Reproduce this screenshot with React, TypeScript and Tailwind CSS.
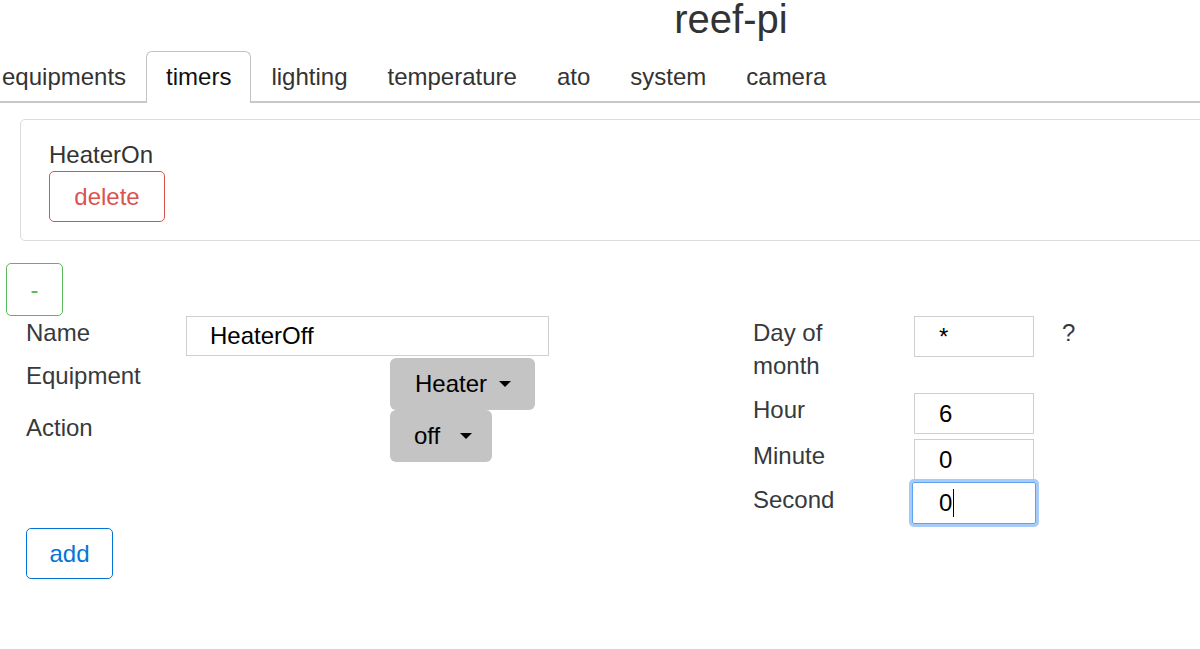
import React from 'react';

const tabs = ['equipments', 'timers', 'lighting', 'temperature', 'ato', 'system', 'camera'];

const Caret: React.FC<{ gap: string }> = ({ gap }) => (
  <span className={`${gap} inline-block w-0 h-0 border-x-[6px] border-x-transparent border-t-[6px] border-t-black align-middle`}></span>
);

const Field: React.FC<{ value: string; focused?: boolean }> = ({ value, focused }) => (
  <div
    className={
      focused
        ? 'w-[124px] h-[42px] -ml-[2px] -mt-[1px] pl-[26px] flex items-center border border-[#5fa2f2] rounded-[2px] shadow-[0_0_0_3px_#a6cbf9] text-black text-[24px]'
        : 'w-[120px] h-[41px] pl-[24px] flex items-center border border-[#cfcfcf] text-black text-[24px]'
    }
  >
    {value}
    {focused && <span className="ml-[1px] inline-block w-[1px] h-[28px] bg-black"></span>}
  </div>
);

const App: React.FC = () => {
  return (
    <div className="min-h-screen w-[1200px] overflow-hidden bg-white font-['Liberation_Sans',Arial,sans-serif] text-[#373a3c]">
      {/* Header */}
      <h1 className="pl-[262px] text-center text-[40px] leading-[38px] text-[#333]">reef-pi</h1>

      {/* Tabs */}
      <div className="mt-[13px] border-b-2 border-[#c8c8c8] w-[1220px]">
        <ul className="flex -ml-[18px] -mb-[2px]">
          {tabs.map((t) => (
            <li
              key={t}
              className={
                t === 'timers'
                  ? 'px-[19px] pt-[8px] pb-[10px] text-[24px] leading-[33px] text-[#111] bg-white border border-b-0 border-[#c2c2c2] rounded-t-[6px]'
                  : 'px-[20px] pt-[9px] pb-[8px] text-[24px] leading-[33px] text-[#333]'
              }
            >
              {t}
            </li>
          ))}
        </ul>
      </div>

      {/* Existing timers */}
      <div className="mt-[16px] ml-[20px] w-[1220px] border border-[#dcdcdc] rounded-[5px] pl-[28px] pt-[18px] pb-[18px]">
        <div className="text-[24px] leading-[33px] text-[#333]">HeaterOn</div>
        <button className="w-[116px] h-[51px] border border-[#d9534f] rounded-[5px] text-[#d9534f] text-[24px]">
          delete
        </button>
      </div>

      {/* Toggle */}
      <button className="mt-[22px] ml-[6px] w-[57px] h-[53px] border border-[#5cb85c] rounded-[5px] text-[#5cb85c] text-[24px] block">
        -
      </button>

      {/* New timer form */}
      <div className="flex">
        <div className="w-[753px] pl-[26px]">
          <div className="flex h-[42px]">
            <div className="w-[160px] text-[24px] leading-[33px]">Name</div>
            <div className="w-[363px] h-[40px] pl-[23px] flex items-center border border-[#cfcfcf] text-black text-[24px]">
              HeaterOff
            </div>
          </div>
          <div className="flex h-[52px]">
            <div className="w-[160px] mt-[1px] text-[24px] leading-[33px]">Equipment</div>
            <button className="ml-[204px] h-[52px] pl-[25px] pr-[24px] flex items-center bg-[#c4c4c4] rounded-[6px] text-black text-[24px]">
              Heater
              <Caret gap="ml-[12px]" />
            </button>
          </div>
          <div className="flex h-[52px]">
            <div className="w-[160px] mt-[1px] text-[24px] leading-[33px]">Action</div>
            <button className="ml-[204px] h-[52px] pl-[24px] pr-[20px] flex items-center bg-[#c4c4c4] rounded-[6px] text-black text-[24px]">
              off
              <Caret gap="ml-[20px]" />
            </button>
          </div>
          <button className="mt-[66px] w-[87px] h-[51px] border border-[#0275d8] rounded-[5px] text-[#0275d8] text-[24px]">
            add
          </button>
        </div>

        <div className="flex-1">
          <div className="flex h-[77px]">
            <div className="w-[161px] text-[24px] leading-[33px]">
              Day of
              <br />
              month
            </div>
            <Field value="*" />
            <div className="ml-[28px] text-[24px] leading-[33px]">?</div>
          </div>
          <div className="flex h-[46px]">
            <div className="w-[161px] text-[24px] leading-[33px]">Hour</div>
            <Field value="6" />
          </div>
          <div className="flex h-[44px]">
            <div className="w-[161px] text-[24px] leading-[33px]">Minute</div>
            <Field value="0" />
          </div>
          <div className="flex h-[44px]">
            <div className="w-[161px] text-[24px] leading-[33px]">Second</div>
            <Field value="0" focused />
          </div>
        </div>
      </div>
    </div>
  );
};

export default App;
